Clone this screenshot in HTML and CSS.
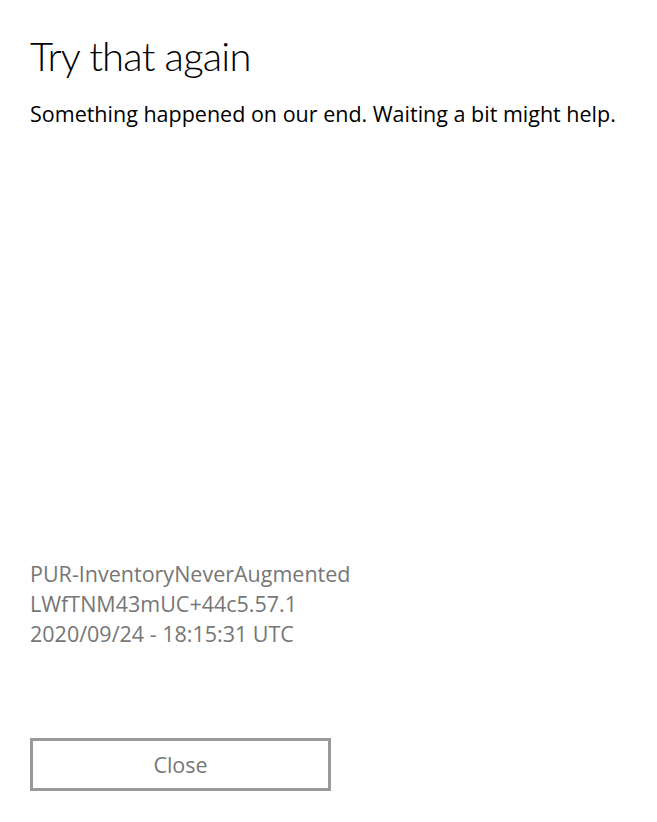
FILE: index.html
```html
<!DOCTYPE html>
<html lang="en">
<head>
<meta charset="utf-8">
<title>Try that again</title>
<link rel="stylesheet" href="styles.css">
</head>
<body>
<main class="dialog">
  <h1 class="title">Try that again</h1>
  <p class="message">Something happened on our end. Waiting a bit might help.</p>
  <div class="spacer"></div>
  <div class="details">
    <div class="line">PUR-InventoryNeverAugmented</div>
    <div class="line">LWfTNM43mUC+44c5.57.1</div>
    <div class="line">2020/09/24 - 18:15:31 UTC</div>
  </div>
  <button class="close-btn" type="button">Close</button>
</main>
</body>
</html>
```
FILE: styles.css
```css
html, body {
  margin: 0;
  padding: 0;
  background: #ffffff;
}
body {
  font-family: "Open Sans", "Noto Sans", "Liberation Sans", sans-serif;
  color: #000000;
}
.dialog {
  box-sizing: border-box;
  height: 822px;
  padding: 28px 0 31px 30px;
  display: flex;
  flex-direction: column;
  align-items: flex-start;
}
.title {
  margin: 0;
  font-family: "Lato", "Open Sans", sans-serif;
  font-size: 40px;
  font-weight: 300;
  line-height: 56px;
  letter-spacing: -0.8px;
}
.message {
  margin: 16px 0 0 0;
  font-size: 21.5px;
  font-weight: 400;
  line-height: 28px;
}
.spacer {
  flex: 1;
}
.details {
  color: #767676;
  font-size: 21.5px;
  line-height: 30px;
}
.close-btn {
  margin-top: 89px;
  width: 301px;
  height: 53px;
  box-sizing: border-box;
  border: 3px solid #999999;
  background: #ffffff;
  color: #777777;
  font-family: inherit;
  font-size: 21.5px;
  padding: 0;
}
```
